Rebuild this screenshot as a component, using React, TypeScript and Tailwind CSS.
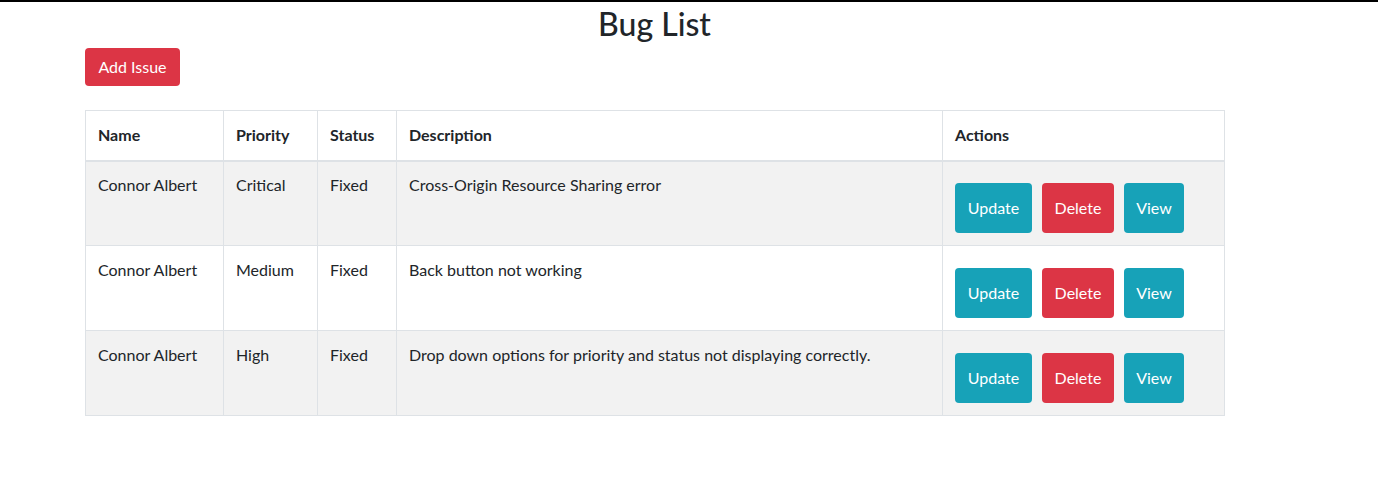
import React from 'react';

type Bug = {
  name: string;
  priority: string;
  status: string;
  description: string;
};

const BUGS: Bug[] = [
  { name: 'Connor Albert', priority: 'Critical', status: 'Fixed', description: 'Cross-Origin Resource Sharing error' },
  { name: 'Connor Albert', priority: 'Medium', status: 'Fixed', description: 'Back button not working' },
  { name: 'Connor Albert', priority: 'High', status: 'Fixed', description: 'Drop down options for priority and status not displaying correctly.' },
];

const App: React.FC = () => {
  return (
    <div className="min-h-[491px] bg-white font-['Lato','Liberation_Sans',sans-serif] text-base text-[#212529]">
      <div className="h-[2px] w-full bg-black" />
      <div className="ml-[85px] w-[1139px]">
        <h2 className="mt-[3px] text-center text-[32px] font-medium leading-[38px]">Bug List</h2>
        <button className="mt-[5px] h-[38px] w-[95px] rounded-[4px] bg-[#dc3545] text-base leading-6 text-white">
          Add Issue
        </button>

        <table className="mt-6 w-[1139px] table-fixed border-collapse">
          <colgroup>
            <col className="w-[138px]" />
            <col className="w-[94px]" />
            <col className="w-[79px]" />
            <col className="w-[546px]" />
            <col className="w-[282px]" />
          </colgroup>
          <thead>
            <tr className="h-[50px]">
              {['Name', 'Priority', 'Status', 'Description', 'Actions'].map((h) => (
                <th
                  key={h}
                  className="border border-b-2 border-[#dee2e6] px-3 text-left align-middle font-bold leading-6"
                >
                  {h}
                </th>
              ))}
            </tr>
          </thead>
          <tbody>
            {BUGS.map((bug, index) => {
              const pad = index === 0 ? 'pt-[11px]' : 'pt-3';
              return (
                <tr key={bug.description} className={`h-[85px] ${index % 2 === 0 ? 'bg-[#f2f2f2]' : 'bg-white'}`}>
                  <td className={`border border-[#dee2e6] px-3 align-top leading-6 ${pad}`}>{bug.name}</td>
                  <td className={`border border-[#dee2e6] px-3 align-top leading-6 ${pad}`}>{bug.priority}</td>
                  <td className={`border border-[#dee2e6] px-3 align-top leading-6 ${pad}`}>{bug.status}</td>
                  <td className={`border border-[#dee2e6] px-3 align-top leading-6 ${pad}`}>{bug.description}</td>
                  <td className={`border border-[#dee2e6] px-3 align-top ${pad}`}>
                    <div className="mt-[10px] flex gap-[10px]">
                      <button className="h-[50px] w-[77px] rounded-[4px] bg-[#17a2b8] text-base text-white">Update</button>
                      <button className="h-[50px] w-[72px] rounded-[4px] bg-[#dc3545] text-base text-white">Delete</button>
                      <button className="h-[50px] w-[60px] rounded-[4px] bg-[#17a2b8] text-base text-white">View</button>
                    </div>
                  </td>
                </tr>
              );
            })}
          </tbody>
        </table>
      </div>
    </div>
  );
};

export default App;
